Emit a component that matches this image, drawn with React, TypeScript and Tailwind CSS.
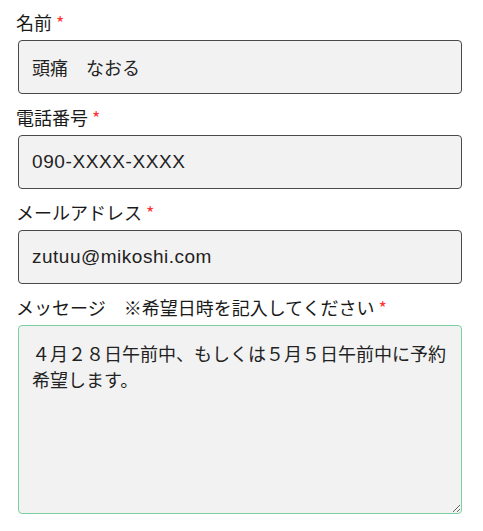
import React from "react";

const font = { fontFamily: '"Noto Sans CJK JP", "Noto Sans", sans-serif' };
const latin = { fontFamily: '"Liberation Sans", "Noto Sans CJK JP", sans-serif' };

function Label({ text }: { text: string }) {
  return (
    <div className="h-[26px] mb-[5px] flex items-center text-[18px] text-[#1a1a1a] leading-none" style={font}>
      <span className="-ml-[2px]">{text}</span>
      <span className="ml-[4px] text-[#f33] text-[18px]">*</span>
    </div>
  );
}

export default function App() {
  const base =
    "block w-full h-[54px] box-border border border-[#4a4a4a] rounded-[4px] bg-[#f2f2f2] px-[13px] text-[#222] outline-none";
  return (
    <div className="w-[483px] h-[531px] bg-white pt-[9px] px-[18px]" style={font}>
      <div className="w-[444px]">
        <Label text="名前" />
        <input readOnly value="頭痛　なおる" className={`${base} text-[18px]`} style={font} />
        <div className="mt-[10px]">
          <Label text="電話番号" />
          <input readOnly value="090-XXXX-XXXX" className={`${base} text-[19px] tracking-[0.6px]`} style={latin} />
        </div>
        <div className="mt-[10px]">
          <Label text="メールアドレス" />
          <input readOnly value="zutuu@mikoshi.com" className={`${base} text-[19px] tracking-[0.5px]`} style={latin} />
        </div>
        <div className="mt-[10px]">
          <Label text="メッセージ　※希望日時を記入してください" />
          <textarea
            readOnly
            value={"４月２８日午前中、もしくは５月５日午前中に予約希望します。"}
            className="block w-full h-[189px] box-border border border-[#7ccfa0] rounded-[4px] bg-[#f2f2f2] pl-[13px] pr-[14px] pt-[14px] text-[18px] leading-[26px] text-[#222] outline-none"
            style={font}
          />
        </div>
      </div>
    </div>
  );
}
